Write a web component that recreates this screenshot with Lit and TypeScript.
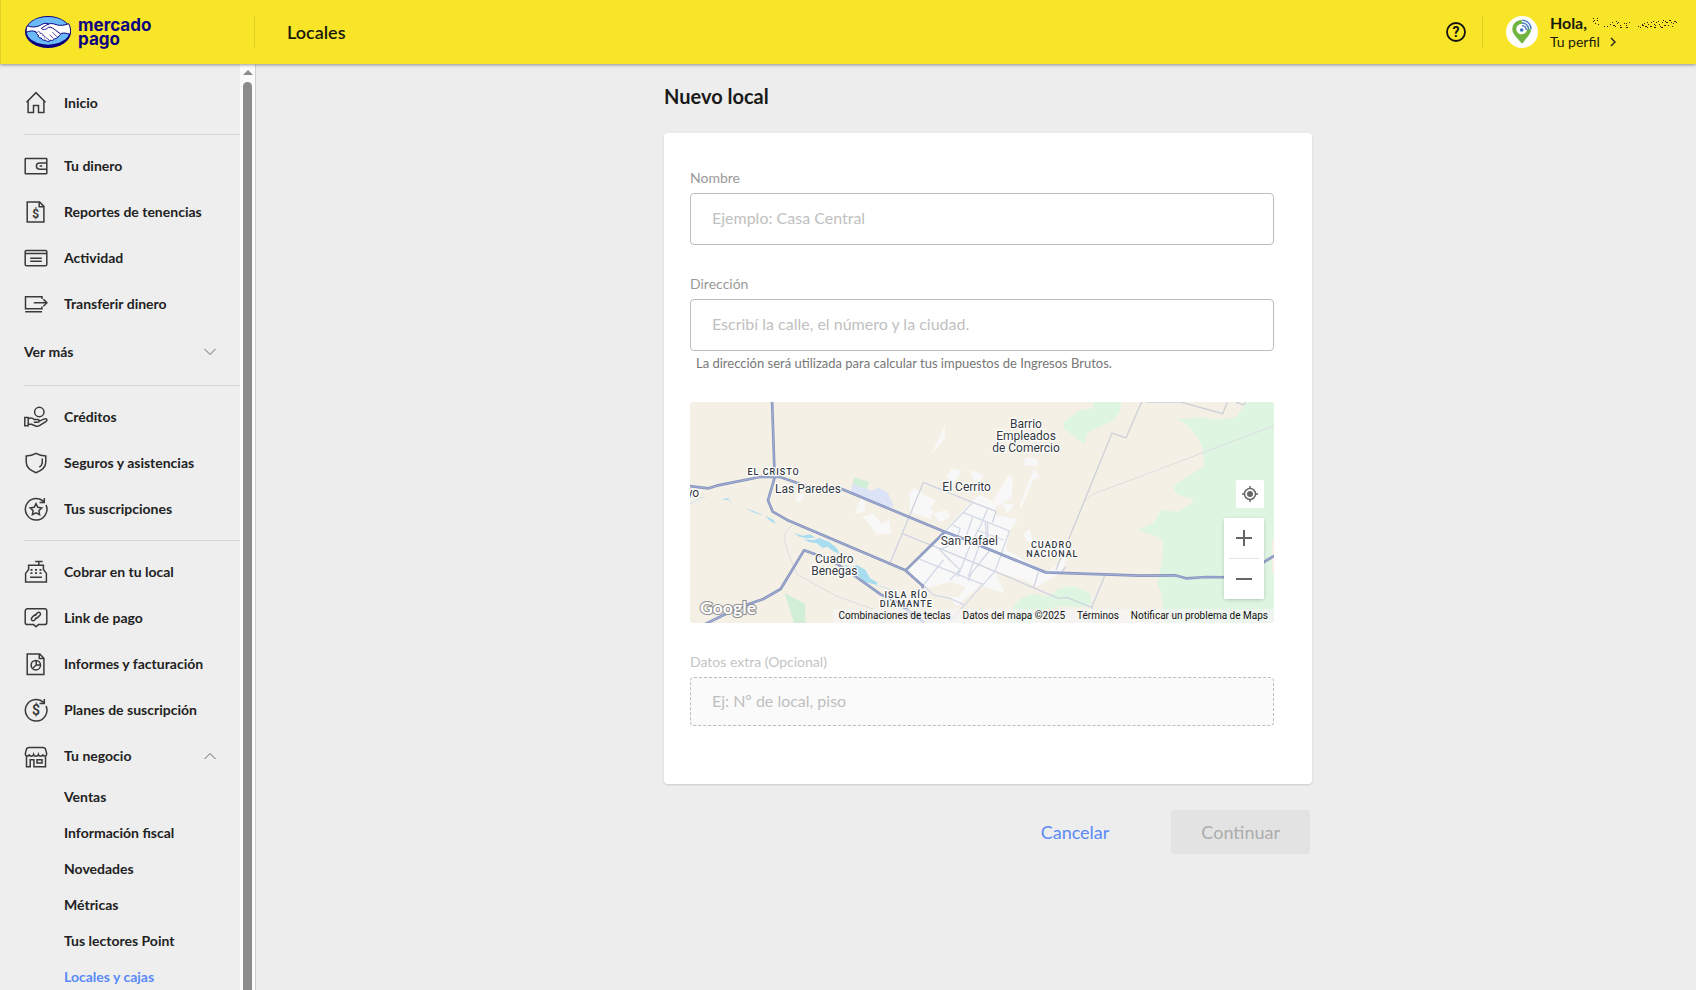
import { LitElement, html, svg, css, nothing, type TemplateResult } from "lit";
import { customElement, property, state } from "lit/decorators.js";
import { classMap } from "lit/directives/class-map.js";

const FONT = css`Lato, "Open Sans", sans-serif`;

const icons: Record<string, TemplateResult> = {
  home: svg`<path d="M2.5 11.2 12 1.6l9.5 9.6M4.1 9.8v11.7h5.4v-7h5v7h5.4V9.8"/>`,
  wallet: svg`<rect x="1.2" y="4.4" width="21.6" height="15.4" rx=".6"/><path d="M22.8 9h-7.3a3 3 0 0 0 0 6.2h7.3M15.6 12h2.6"/>`,
  report: svg`<path d="M3.2 2h12.4l4.3 4.4V22H3.2zM15.2 2v4.8h4.7"/><text class="glyph" x="11.6" y="17.6">$</text>`,
  activity: svg`<rect x="1.2" y="4.4" width="21.6" height="15.4" rx="1.2"/><path d="M1.2 7.6h21.6M6.2 12.2h11.6M6.2 15.2h11.6"/>`,
  transfer: svg`<path d="M18 7V4.7H1.5v12.1H18v-2.4M1.2 19.7H18M9.8 10.8h13M19.4 7.4l3.5 3.4-3.5 3.4"/>`,
  credit: svg`<circle cx="15.3" cy="7" r="4.7"/><path d="M.8 12.6h3.4v8.2H.8zM4.2 13.8c2.2-1.4 4.4-.9 6.2.8h3.4c1.9 0 1.9 2.7 0 2.7H9.8M15 16.4l5.4-2.5c2-.8 3.3 1.1 1.8 2.4l-6.8 4.4c-1.3.8-2.4.8-3.8.3l-4-1.7H4.2"/>`,
  shield: svg`<path d="M12 2.4C9 4.2 5.6 5 2.2 5v6c0 5 3.800 8.400 9.800 10.700 6-2.300 9.800-5.700 9.800-10.700V5C18.400 5 15 4.200 12 2.400z"/><path d="M18.300 7.600v3.600c0 2-1 3.600-3 4.900"/>`,
  subscription: svg`<path d="M22.100 8A10.800 10.800 0 1 1 19.600 4.400M22.100 8a10.800 10.800 0 0 1 .6 2.600M20.300 1v4.600h-4.800"/><path d="m12 6.600 1.800 3.700 4 .6-2.900 2.800.7 4-3.600-1.900-3.600 1.900.7-4-2.900-2.800 4-.6z"/>`,
  register: svg`<path d="M11.200 1.500h7.400M14.800 1.500v3.700M4.600 5.200h14.800v4.200l3 4V22H1.600v-8.600l3-4zM6 17.300h12"/><path d="M6.500 9.900h2m2.500 0h2m2.500 0h2M6.500 13.200h2m2.500 0h2m2.500 0h2" stroke-width="1.800"/>`,
  link: svg`<path d="M3.400 2.800h17.200a2.200 2.200 0 0 1 2.200 2.200v11.400a2.200 2.200 0 0 1-2.200 2.200h-6.200L12 20.800l-2.400-2.200H3.400a2.200 2.200 0 0 1-2.200-2.200V5a2.200 2.200 0 0 1 2.200-2.200z"/><path d="m10.700 9.600 2.900-2.900c1.600-1.400 3.900.7 2.500 2.400l-2.500 2.500c-.8.7-1.700.7-2.400.2M13.100 11.200l-2.800 3c-1.600 1.500-4-.7-2.500-2.400l2.300-2.400c.8-.7 1.800-.7 2.500-.1"/>`,
  invoice: svg`<path d="M3.200 1.900h12.600l4.100 4.300v16.300H3.200zM15.300 1.900v4.700h4.600"/><circle cx="11.800" cy="13.200" r="4.700"/><path d="M12.200 8.500v4.500l-3.600 3.300M12.200 13h4.200"/>`,
  plan: svg`<path d="M22.100 8A10.800 10.800 0 1 1 19.600 4.400M22.100 8a10.800 10.800 0 0 1 .6 2.600M20.300 1v4.600h-4.800"/><text class="glyph big" x="12" y="16.700">$</text>`,
  store: svg`<path d="M5 3.400h14c1.500 0 2.400 1 2.700 2.300l1 4.200c0 2.600-3.300 3-3.900.6-.5 2.200-3.800 2.200-4.400 0-.6 2.200-4.200 2.200-4.800 0-.6 2.200-3.900 2.200-4.400 0-.6 2.400-3.900 2-3.900-.6l1-4.200C2.600 4.400 3.500 3.400 5 3.400zM2.500 12v10.700h3.700v-7h3.700v7h11.600V12M13 15.700h5v3.400h-5z"/>`,
};

interface Entry {
  icon: string;
  label: string;
}

const groups: Entry[][] = [
  [{ icon: "home", label: "Inicio" }],
  [
    { icon: "wallet", label: "Tu dinero" },
    { icon: "report", label: "Reportes de tenencias" },
    { icon: "activity", label: "Actividad" },
    { icon: "transfer", label: "Transferir dinero" },
  ],
  [
    { icon: "credit", label: "Créditos" },
    { icon: "shield", label: "Seguros y asistencias" },
    { icon: "subscription", label: "Tus suscripciones" },
  ],
  [
    { icon: "register", label: "Cobrar en tu local" },
    { icon: "link", label: "Link de pago" },
    { icon: "invoice", label: "Informes y facturación" },
    { icon: "plan", label: "Planes de suscripción" },
  ],
];

const business = ["Ventas", "Información fiscal", "Novedades", "Métricas", "Tus lectores Point", "Locales y cajas"];

const mainRoads =
  "M276 10l8 238-20 68 14 34 42 24 356 152 52 46v8M20 272l66 8 24-8 130-26 60 0 80 28L485 282 790 409 850 431 1095 532 1380 542 1485 541 1518 550 1580 546 1700 548M676 527l118-116M1740 508l50-30M70 690l110-54 70-24 52-30 70-116 80 28 60 40 90 64 50 24 80 60";

@customElement("mp-header")
class MpHeader extends LitElement {
  static styles = css`
    :host {
      display: flex;
      align-items: center;
      box-sizing: border-box;
      height: 64px;
      background: #f8e528;
      border-left: 1px solid #e0cf24;
      box-shadow: 0 1px 3px rgba(0, 0, 0, 0.4);
      color: #1a1a0c;
      font-family: ${FONT};
      position: relative;
      z-index: 2;
    }
    a { color: inherit; text-decoration: none; }
    .brand {
      display: flex;
      align-items: center;
      gap: 7px;
      box-sizing: border-box;
      width: 254px;
      height: 32px;
      padding-left: 24px;
      border-right: 1px solid #ddcc24;
      color: #0a0080;
      font: 700 17px/14px Inter, sans-serif;
    }
    .title { flex: 1; margin: 0; padding-left: 32px; font-size: 18px; line-height: 24px; font-weight: 600; }
    .help { padding: 0; border: 0; background: none; height: 20px; width: 20px; cursor: pointer; }
    .help svg { display: block; }
    .mark { font: 700 14px Roboto, sans-serif; text-anchor: middle; fill: #111; }
    .profile {
      display: flex;
      align-items: center;
      gap: 12px;
      height: 32px;
      margin-left: 16px;
      padding: 0 15px 0 23px;
      border-left: 1px solid #ddcc24;
    }
    .text { display: flex; flex-direction: column; font-size: 14px; line-height: 19px; }
    .line { display: flex; align-items: center; gap: 4px; height: 19px; }
    .line b { font-size: 16px; font-weight: 700; }
    .line.sub { gap: 9px; }
  `;

  render() {
    return html`
      <a class="brand" href="#">
        <svg width="46" height="32" viewBox="0 0 138 96" aria-hidden="true">
          <ellipse cx="69" cy="48" rx="69" ry="48" fill="#0a0080" />
          <ellipse cx="69" cy="44.500" rx="65" ry="41.500" fill="#6cb9f8" />
          <path d="M7 29C21 35 36 34 49 26c8-5 15-5 22-2 12-5 24 5 36 4 9 0 17-2 24-5 6 10 7 23 4 32-9-3-17-5-26-3-3 5-5 6-8 8-3 6-7 8-12 8-3 5-8 6-13 5-5 5-12 4-15-1-6 2-11-1-12-6-7 1-11-4-9-9-5-2-7-6-6-9C25 43 14 44 4 49c-1-7 0-14 3-20z" fill="#fff" stroke="#0a0080" stroke-width="3" />
          <path d="M72 24c-8 2-14 8-23 13 4 6 14 4 21-3 9-2 16 4 22 9l15 11" fill="none" stroke="#0a0080" stroke-width="3" />
          <path d="M74 56l12 12M82 49l15 14M62 64l12 9M36 50c4-6 10-3 9 3 6-3 10 1 8 6 6-1 9 4 5 8" fill="none" stroke="#0a0080" stroke-width="2" />
        </svg>
        <span>mercado<br />pago</span>
      </a>
      <h1 class="title">Locales</h1>
      <button class="help" aria-label="Ayuda">
        <svg width="20" height="20" viewBox="0 0 20 20">
          <circle cx="10" cy="10" r="9" fill="none" stroke="#111" stroke-width="1.800" />
          <text class="mark" x="10" y="15">?</text>
        </svg>
      </button>
      <a class="profile" href="#">
        <svg width="32" height="32" viewBox="0 0 96 96" aria-hidden="true">
          <circle cx="48" cy="48" r="48" fill="#fff" />
          <path d="M48 12c-17 0-29 12-29 28 0 14 14 26 29 43 14-17 27-29 27-43l-12 0c0 9-7 15-16 15s-16-7-16-16 7-15 17-15z" fill="#6fb43f" />
          <circle cx="47" cy="42" r="5.500" fill="#3f78c0" />
          <path d="M48 29c8 0 13 6 13 13M48 21c12 0 20 9 20 20M49 13c16 0 26 12 26 27" fill="none" stroke="#4b7fc4" stroke-width="4.500" />
        </svg>
        <span class="text">
          <span class="line">
            <b>Hola,</b>
            <svg width="90" height="14" viewBox="0 0 90 14" shape-rendering="crispEdges" aria-hidden="true">
              <path d="M2 2h1m3 0h1M3 4h1m2 0h1M2 5h1M4 7h1m2 1h1M13 10h1m2 0h1m2-2h1m1-2h1m0 3h2m1-4h1m0 2h1m0-1h1m1 3h1m-1 2h2m-7-1h1m8-3h1m1 2h1m-1 2h2m1-5h1m-4 1h1M47 10h1m1 1h1m1-2h2m0-2h1m0 3h2m0-4h1m0 2h1m1 2h2m-1-4h1m1-1h1m0 3h1m-1 3h2m0-5h1m1-1h1m0 3h1m0 2h1m1-4h1m0-2h1m0 5h2m1-3h1m-3-1h1m2 4h1m0-5h2m0 2h1m1 1h1m-2 3h1m1-5h2M51 8h1m4 3h1m7-2h1m5 2h2m3-5h1m6 1h1m2-1h1" fill="none" stroke="#2a2708" transform="translate(0 .5)" />
            </svg>
          </span>
          <span class="line sub">
            Tu perfil
            <svg width="8" height="10" viewBox="0 0 8 10" aria-hidden="true"><path d="m2 1 4 4-4 4" fill="none" stroke="#222" stroke-width="1.400" /></svg>
          </span>
        </span>
      </a>
    `;
  }
}

@customElement("mp-sidebar")
class MpSidebar extends LitElement {
  @state() private open = true;

  static styles = css`
    :host {
      display: grid;
      grid-template-columns: 1fr 15px;
      overflow: hidden;
      background: #eeeeee;
      border-right: 1px solid #d0d0d0;
      color: #222;
      font-family: ${FONT};
    }
    nav { padding: 8px 0 0 24px; min-width: 0; overflow: hidden; }
    ul { list-style: none; margin: 0; padding: 8px 0; }
    ul.group + ul.group { border-top: 1px solid #d6d6d6; }
    a, .toggle {
      display: flex;
      align-items: center;
      gap: 16px;
      width: 100%;
      box-sizing: border-box;
      height: 46px;
      padding: 0 24px 0 0;
      border: 0;
      background: none;
      color: inherit;
      font: 700 14px/20px ${FONT};
      text-align: left;
      text-decoration: none;
      white-space: nowrap;
      cursor: pointer;
    }
    .toggle.more { height: 50px; }
    .toggle span { flex: 1; }
    .icon { flex: none; fill: none; stroke: #3a3a3a; stroke-width: 1.500; }
    .glyph { font: 600 12px Roboto, sans-serif; fill: #333; stroke: none; text-anchor: middle; }
    .glyph.big { font-size: 14px; }
    .chevron { flex: none; fill: none; stroke: #666; stroke-width: 1; }
    .children { padding: 0 0 0 40px; }
    .children a { height: 36px; }
    .current { color: #5a8af8; }
    .track { background: #fbfbfb; display: flex; flex-direction: column; align-items: center; padding-top: 6px; gap: 7px; }
    .thumb { flex: 1; width: 9px; border-radius: 5px 5px 0 0; background: #8b8b8b; }
  `;

  private icon(name: string) {
    return html`<svg class="icon" width="24" height="24" viewBox="0 0 24 24" aria-hidden="true">${icons[name]}</svg>`;
  }

  private chevron(up: boolean) {
    return html`<svg class="chevron" width="12" height="8" viewBox="0 0 12 8" aria-hidden="true">
      <path d=${up ? "M.5 7 6 1.500 11.500 7" : "M.5 1 6 6.500 11.500 1"} />
    </svg>`;
  }

  render() {
    return html`
      <nav aria-label="Principal">
        ${groups.map(
          (group, index) => html`<ul class="group">
            ${group.map((entry) => html`<li><a href="#">${this.icon(entry.icon)}<span>${entry.label}</span></a></li>`)}
            ${index === 1
              ? html`<li><button class="toggle more"><span>Ver más</span>${this.chevron(false)}</button></li>`
              : nothing}
            ${index === groups.length - 1
              ? html`<li>
                  <button class="toggle" aria-expanded=${this.open} @click=${() => (this.open = !this.open)}>
                    ${this.icon("store")}<span>Tu negocio</span>${this.chevron(this.open)}
                  </button>
                  ${this.open
                    ? html`<ul class="children">
                        ${business.map(
                          (label) => html`<li>
                            <a href="#" class=${classMap({ current: label === "Locales y cajas" })}>${label}</a>
                          </li>`,
                        )}
                      </ul>`
                    : nothing}
                </li>`
              : nothing}
          </ul>`,
        )}
      </nav>
      <div class="track" aria-hidden="true">
        <svg width="10" height="5" viewBox="0 0 10 5"><path d="M0 5 5 0l5 5z" fill="#8b8b8b" /></svg>
        <div class="thumb"></div>
      </div>
    `;
  }
}

@customElement("mp-map")
class MpMap extends LitElement {
  static styles = css`
    :host {
      display: block;
      position: relative;
      height: 221px;
      overflow: hidden;
      border-radius: 4px;
      background: #f5f0e5;
      font-family: Roboto, sans-serif;
    }
    .canvas { display: block; width: 100%; height: 100%; }
    .place { font: 400 36px Roboto, sans-serif; }
    .zone { font: 500 27px Roboto, sans-serif; letter-spacing: 3px; }
    .names {
      fill: #33373d;
      stroke: #fff;
      stroke-width: 7px;
      stroke-linejoin: round;
      paint-order: stroke;
      text-anchor: middle;
    }
    .google {
      font: 700 53px Lato, sans-serif;
      fill: #fff;
      stroke: #8d8d8d;
      stroke-width: 6px;
      paint-order: stroke;
    }
    .controls {
      position: absolute;
      right: 10px;
      bottom: 24px;
      display: flex;
      flex-direction: column;
      align-items: flex-end;
      gap: 10px;
    }
    button {
      display: grid;
      place-items: center;
      padding: 0;
      border: 0;
      background: #fff;
      cursor: pointer;
    }
    .locate { width: 28px; height: 28px; border-radius: 2px; }
    .zoom { width: 40px; box-shadow: 0 1px 4px -1px rgba(0, 0, 0, 0.3); background: #fff; }
    .zoom button { width: 40px; height: 40px; }
    .zoom hr { width: 30px; height: 1px; margin: 0 auto; border: 0; background: #e6e6e6; }
    .legal {
      position: absolute;
      right: 0;
      bottom: 0;
      display: flex;
      font-size: 10px;
      line-height: 14px;
    }
    .legal > * { display: block; padding: 0 6px; background: rgba(245, 245, 245, 0.7); color: #111; text-decoration: none; white-space: nowrap; }
  `;

  render() {
    return html`
      <svg class="canvas" viewBox="30 21 1752 663" preserveAspectRatio="xMidYMid slice" role="img" aria-label="Mapa de San Rafael">
        <rect x="-2000" y="-500" width="6000" height="2000" fill="#f5f0e5" />
        <g fill="#def5e2">
          <path d="M1240 20h84l-4 30-22 27-45 21-33 18-6 32-62-46v-22l48-34 40-6z" />
          <path d="M1700 21l-30 44-60 10-38-8-82 5 36 22 30 40 12 24 4 54-46 32-36 20-10 16 12 18 46 16 4 6-50 30-48-6-24 40-50 22 60 18 20 14-4 60-14 70 14 30 6 86h430V21z" />
          <path d="M1000 636l24-28 36-12 50 8 24-22 46-10 50 22 4 32-18 10-70-2-50 8-50 44h-60z" />
        </g>
        <path d="M1782 425l-7 20v88l7 4z" fill="#f5f0e5" />
        <path d="M314 594l62 34v56h-34z" fill="#d1eed6" />
        <path d="M523 247l45 14-10 26-42-14z" fill="#d1eed6" />
        <path d="M517 267l58 20 22-9 27 16 18 40-22 6-108-46z" fill="#dde3f6" />
        <g fill="#a8dcef">
          <path d="M124 314l20-5 14 20-12-14z" />
          <path d="M192 337l60 24-30-8zM256 362l24 12 8 12-18-8zM342 414l26 8 22-4 16 10-28 2-20-5zM372 433l30 2 16-6 30 12 22 18 10 18-20-8-18-14-14 4-18-14-24-4z" />
          <path d="M490 508l24 10 16-8 26 14 14 26 22 12-2 8-38-10-22-22-22-12z" />
        </g>
        <path d="M30 326l46-22M590 570l60 20M690 600l40 8" fill="none" stroke="#b9dfee" stroke-width="2" />

        <g fill="#f8f8f8">
          <path d="M794 92l2 34-36 46-6 6zM350 294l24 4-14 24-12-4z" />
          <path d="M545 310l12 14-4 26-30 6zM550 364l30-8 24 30 24-10 6 40-44 2zM690 300l26 40 44 6-10 26-60-22zM815 220l30 8-26 40-18-24z" />
        </g>
        <g fill="#f8f8f8" transform="translate(600 135)">
          <path d="M75 392L190 275 270 188 300 165 350 190 345 225 415 238 385 280 378 330 500 396 535 372 560 340 555 370 545 396 470 440 435 420 345 395 375 460 340 450 300 435 230 500 210 470 130 440z" />
          <path d="M385 105l14 8-4 60-40 24-14-16zM432 55l28-2 14 10-2 14h-36zM462 88l18 24-20 6-34 82h-8l32-84zM366 190l36 4-20 26zM275 90l36 16-14 24-22-18zM84 165l20-20 30 20 34 16-20 32-30-8zM160 220l40-10 10 22-30 14zM430 280l20-12 6 30 24 10-40-2zM440 405l20 10 -8 18z" />
        </g>
        <path d="M740 580l70-20 46 16-20 30-60-4z" fill="#f5f0e5" />
        <path d="M680 650h60l20 34h-70z" fill="#e9ecf6" />

        <g fill="none" stroke="#cdd0d9" stroke-width="4">
          <path d="M1388 21l-6 6-44 102-42-15-82 202-66 160-20 48" />
          <path d="M1400 21l102 0 126 35 14-35M1668 22l24 8 8-20" />
          <path d="M1216 316l22-18 160-60 384-146M315 440c-4-24 6-40 22-48M315 440c10 40 20 60 36 98l120 66 130 46 80 34" stroke="#dcdde0" stroke-width="3" />
        </g>
        <g fill="none" stroke="#cfd3df" stroke-width="4" transform="translate(600 135)">
          <path d="M30 370L130 127 278 187 348 214 337 248M65 280L180 326 345 394 535 475 560 472 635 502 675 405M635 502l10 50M475 396l-14 46M545 395l12-14" />
          <path d="M278 187L195 275M323 205l-20 50-30 55-40 100M250 218l138 55-28 80-16 42-40 44-94 104M278 230l-20 60-78 40 30 32M218 255l22 10-8 30M316 245l4 60M323 245v60M120 358l190 76M300 310l-35 100M330 330l-56 70-10 24M190 360l-60 75 30 30 50 10 40 18M180 330l60 60-30 30M290 270l80 30M200 275l120 50 180 68" stroke="#d3d9e7" />
        </g>
        <g fill="none" stroke-linejoin="round">
          <path d=${mainRoads} stroke="#8593bf" stroke-width="8" />
          <path d=${mainRoads} stroke="#a3afd2" stroke-width="3" />
        </g>
        <g class="names">
          <text class="zone" x="281" y="240">EL CRISTO</text>
          <text class="place" x="384" y="295">Las Paredes</text>
          <text class="place" x="39" y="306">yo</text>
          <text class="place" x="463" y="505">Cuadro</text>
          <text class="place" x="463" y="541">Benegas</text>
          <text class="place" x="860" y="289">El Cerrito</text>
          <text class="place" x="868" y="450">San Rafael</text>
          <text class="zone" x="679" y="610">ISLA RÍO</text>
          <text class="zone" x="679" y="637">DIAMANTE</text>
          <text class="zone" x="1115" y="459">CUADRO</text>
          <text class="zone" x="1117" y="487">NACIONAL</text>
          <text class="place" x="1038" y="100">Barrio</text>
          <text class="place" x="1038" y="136">Empleados</text>
          <text class="place" x="1038" y="172">de Comercio</text>
        </g>
        <text class="google" x="60" y="658">Google</text>
      </svg>
      <div class="controls">
        <button class="locate" aria-label="Mi ubicación">
          <svg width="16" height="16" viewBox="0 0 16 16" fill="none" stroke="#666" stroke-width="1.500">
            <circle cx="8" cy="8" r="5.500" />
            <circle cx="8" cy="8" r="3" fill="#666" stroke="none" />
            <path d="M8 0v2.500M8 13.500V16M0 8h2.500M13.500 8H16" />
          </svg>
        </button>
        <div class="zoom">
          <button aria-label="Acercar"><svg width="18" height="18" viewBox="0 0 18 18"><path d="M1 9h16M9 1v16" stroke="#666" stroke-width="2" /></svg></button>
          <hr />
          <button aria-label="Alejar"><svg width="18" height="18" viewBox="0 0 18 18"><path d="M1 9h16" stroke="#666" stroke-width="2" /></svg></button>
        </div>
      </div>
      <div class="legal">
        <a href="#">Combinaciones de teclas</a>
        <span>Datos del mapa ©2025</span>
        <a href="#">Términos</a>
        <a href="#">Notificar un problema de Maps</a>
      </div>
    `;
  }
}

@customElement("mp-field")
class MpField extends LitElement {
  @property() label = "";
  @property() placeholder = "";
  @property() hint = "";
  @property({ type: Boolean }) disabled = false;

  static styles = css`
    :host { display: flex; flex-direction: column; font-family: ${FONT}; }
    label { color: #999; font-size: 14px; line-height: 18px; margin-bottom: 6px; }
    input {
      width: 100%;
      height: 52px;
      box-sizing: border-box;
      padding: 0 21px 3px;
      border: 1px solid #bdbdbd;
      border-radius: 4px;
      background: #fff;
      color: #333;
      font: 400 16px ${FONT};
    }
    input::placeholder { color: #bfbfbf; opacity: 1; }
    .off { color: #c4c4c4; }
    input:disabled { height: 49px; border: 1px dashed #bdbdbd; background: #fafafa; }
    p { margin: 3px 0 0 6px; color: #777; font-size: 13px; line-height: 18px; }
  `;

  render() {
    return html`
      <label for="field" class=${classMap({ off: this.disabled })}>${this.label}</label>
      <input id="field" type="text" placeholder=${this.placeholder} ?disabled=${this.disabled} />
      ${this.hint ? html`<p>${this.hint}</p>` : nothing}
    `;
  }
}

@customElement("app-root")
class AppRoot extends LitElement {
  static styles = css`
    :host {
      display: grid;
      grid-template-rows: auto 1fr;
      height: 100vh;
      background: #ededed;
      color: #1a1a1a;
      font-family: ${FONT};
    }
    .body { display: grid; grid-template-columns: 256px 1fr; min-height: 0; }
    main { padding: 18px 0 0 24px; overflow: hidden; }
    form { max-width: 648px; margin: 0 auto; }
    h2 { margin: 0 0 23px; font-size: 20px; line-height: 28px; font-weight: 700; }
    .card {
      display: flex;
      flex-direction: column;
      gap: 30px;
      padding: 36px 38px 58px 26px;
      border-radius: 4px;
      background: #fff;
      box-shadow: 0 1px 2px rgba(0, 0, 0, 0.15);
    }
    .actions { display: flex; justify-content: flex-end; gap: 32px; padding: 26px 2px 0 0; }
    .btn {
      height: 44px;
      padding: 0 30px;
      border: 0;
      border-radius: 2px;
      background: none;
      color: #5a8af8;
      font: 400 18px ${FONT};
      cursor: pointer;
    }
    .btn:disabled { background: #e3e3e3; color: #acacac; }
  `;

  render() {
    return html`
      <mp-header></mp-header>
      <div class="body">
        <mp-sidebar></mp-sidebar>
        <main>
          <form @submit=${(event: Event) => event.preventDefault()}>
            <h2>Nuevo local</h2>
            <div class="card">
              <mp-field label="Nombre" placeholder="Ejemplo: Casa Central"></mp-field>
              <mp-field
                label="Dirección"
                placeholder="Escribí la calle, el número y la ciudad."
                hint="La dirección será utilizada para calcular tus impuestos de Ingresos Brutos."
              ></mp-field>
              <mp-map></mp-map>
              <mp-field label="Datos extra (Opcional)" placeholder="Ej: Nº de local, piso" disabled></mp-field>
            </div>
            <div class="actions">
              <button class="btn" type="button">Cancelar</button>
              <button class="btn" type="submit" disabled>Continuar</button>
            </div>
          </form>
        </main>
      </div>
    `;
  }
}
